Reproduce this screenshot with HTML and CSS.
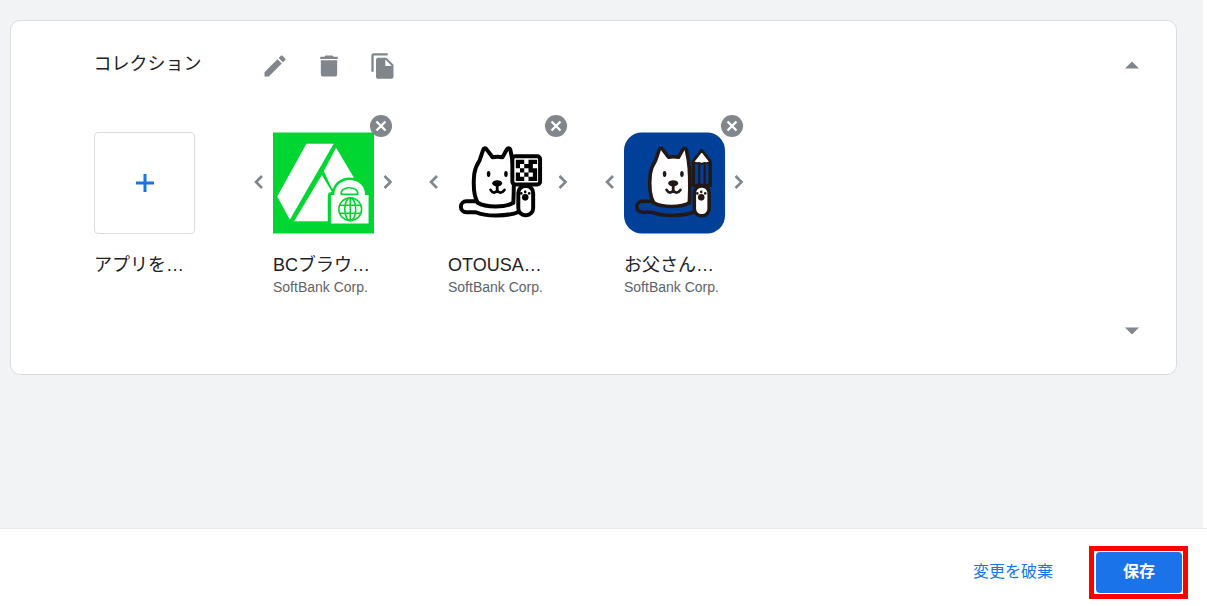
FILE: index.html
```html
<!DOCTYPE html>
<html lang="ja">
<head>
    <meta charset="UTF-8">
    <title>コレクション</title>
    <link rel="stylesheet" href="styles.css">
</head>
<body>
    <main class="content">
        <section class="card">
            <!-- Collection header -->
            <div class="card-head">
                <h2 class="title">コレクション</h2>
                <div class="tools">
                    <svg class="tool" viewBox="0 0 24 24"><path d="M3 17.25V21h3.75L17.81 9.94l-3.75-3.75L3 17.25zM20.71 7.04c.39-.39.39-1.02 0-1.41l-2.34-2.34c-.39-.39-1.02-.39-1.41 0l-1.83 1.83 3.75 3.75 1.83-1.83z"/></svg>
                    <svg class="tool" viewBox="0 0 24 24"><path d="M5 19c0 1.1.9 2 2 2h10c1.1 0 2-.9 2-2V7H5v12zM19.500 4H16l-1-1H9L8 4H4.500v2h15V4z"/></svg>
                    <svg class="tool" viewBox="0 0 24 24"><path d="M16 1H4c-1.1 0-2 .9-2 2v14h2V3h12V1zm-1 4l6 6v10c0 1.1-.9 2-2 2H7.99C6.89 23 6 22.1 6 21l.01-14c0-1.1.89-2 1.99-2h7zm-1 7h5.5L14 6.5V12z"/></svg>
                </div>
                <svg class="caret" viewBox="0 0 14 8"><path d="M0 7.500L7 .5l7 7z"/></svg>
            </div>

            <!-- Apps in the collection -->
            <div class="apps">
                <div class="add-app">
                    <div class="add-tile">
                        <svg class="plus" viewBox="0 0 18 18"><path d="M7.500 0h3v7.500H18v3h-7.500V18h-3v-7.500H0v-3h7.500z"/></svg>
                    </div>
                    <div class="app-name">アプリを…</div>
                </div>

                <div class="app">
                    <div class="app-row">
                        <svg class="arrow" viewBox="0 0 12 16"><path d="M9 2L3 8l6 6"/></svg>
                        <div class="app-icon">
                            <svg class="pic" viewBox="0 0 102 102">
                                <rect width="102" height="102" fill="#00d632"/>
                                <path fill="#fff" d="M33.700 11.300H61.300L17 88 4.300 64.700z"/>
                                <path fill="#fff" d="M63.700 15.300L82 46.300 70 60 59.300 56.300 51.300 39z"/>
                                <path fill="#fff" d="M49.300 43L59.300 59.700 55.300 63V89.700H21.300z"/>
                                <path fill="#fff" stroke="#00d632" stroke-width="5" d="M58.500 63H62C62 43 93 43 93 63H96.500V92H58.500z"/>
                                <path fill="#fff" d="M58.500 63H62C62 43 93 43 93 63H96.500V92H58.500z"/>
                                <path fill="none" stroke="#00d632" stroke-width="1.600" d="M69 62.500c-2-9 18-9 16.500 0z"/>
                                <g fill="none" stroke="#00d632" stroke-width="1.600">
                                    <circle cx="78" cy="77.500" r="11.500"/>
                                    <ellipse cx="78" cy="77.500" rx="5.500" ry="11.500"/>
                                    <path d="M78 66v23M67.500 73.500h21M67.500 81.500h21"/>
                                </g>
                            </svg>
                            <button class="remove"><svg viewBox="0 0 22 22"><path d="M6.500 6.500l9 9M15.500 6.500l-9 9"/></svg></button>
                        </div>
                        <svg class="arrow" viewBox="0 0 12 16"><path d="M2.500 2l6 6-6 6"/></svg>
                    </div>
                    <div class="app-text">
                        <div class="app-name">BCブラウ…</div>
                        <div class="app-vendor">SoftBank Corp.</div>
                    </div>
                </div>

                <div class="app">
                    <div class="app-row">
                        <svg class="arrow" viewBox="0 0 12 16"><path d="M9 2L3 8l6 6"/></svg>
                        <div class="app-icon">
                            <svg class="pic" viewBox="0 0 102 102">
                                <g fill="#fff" stroke="#000" stroke-width="4" stroke-linejoin="round" stroke-linecap="round">
                                    <path d="M28 69.500H18.500a5.500 5.500 0 0 0 0 11H28C38 85 60 85 72 80"/>
                                    <path d="M30 71C26 64 25.500 52 26.500 42 27.500 35 30 31 32 28L35.500 17.500C36 15.500 38 15.500 39 17L45 25C48 24.500 52 24.500 55 25L59.500 17C60.500 15.500 62.500 15.500 63 17.500L65 28C66.500 38 66.500 60 66 71 58 76 38 76 30 71z"/>
                                    <rect x="71" y="54" width="15" height="29.500" rx="7"/>
                                    <rect x="65" y="24" width="28" height="28.500" rx="3"/>
                                </g>
                                <path fill="#000" d="M68.500 27.500h21.500v21.500H68.500zM77 27.500v4.300h4.300v-4.300zM72.700 31.800v4.300H77v-4.300zM85.700 31.800v4.300h4.300v-4.300zM68.500 36.100v4.300h4.200v-4.300zM77 36.100v4.300h4.300v-4.300zM72.700 40.400v4.300H77v-4.300zM81.300 40.400v4.300h4.400v-4.300zM77 44.700v4.300h4.300v-4.300z"/>
                                <g fill="#000">
                                    <ellipse cx="41" cy="42" rx="1.800" ry="3"/>
                                    <ellipse cx="58.500" cy="42" rx="1.800" ry="3"/>
                                    <ellipse cx="49.700" cy="51.300" rx="5" ry="3.200"/>
                                    <circle cx="78" cy="65.500" r="3.300"/>
                                    <circle cx="74" cy="61.500" r="1.300"/>
                                    <circle cx="78" cy="60" r="1.300"/>
                                    <circle cx="82" cy="61.500" r="1.300"/>
                                </g>
                                <path fill="none" stroke="#000" stroke-width="2.800" stroke-linecap="round" d="M43 58c2 3.500 5 3.500 6.700 .5 1.700 3 4.800 3 7.300-.5M49.700 53v5.500"/>
                            </svg>
                            <button class="remove"><svg viewBox="0 0 22 22"><path d="M6.500 6.500l9 9M15.500 6.500l-9 9"/></svg></button>
                        </div>
                        <svg class="arrow" viewBox="0 0 12 16"><path d="M2.500 2l6 6-6 6"/></svg>
                    </div>
                    <div class="app-text">
                        <div class="app-name">OTOUSA…</div>
                        <div class="app-vendor">SoftBank Corp.</div>
                    </div>
                </div>

                <div class="app">
                    <div class="app-row">
                        <svg class="arrow" viewBox="0 0 12 16"><path d="M9 2L3 8l6 6"/></svg>
                        <div class="app-icon">
                            <svg class="pic" viewBox="0 0 102 102">
                                <rect width="102" height="102" rx="18" fill="#004098"/>
                                <g stroke="#231815" stroke-width="3.600" stroke-linejoin="round" stroke-linecap="round">
                                    <path fill="#004098" d="M70 29.500L78.500 18.500 87 29.500V53.500H70z"/>
                                    <path fill="#fff" stroke-width="2" d="M70 29.500L78.500 18.500 87 29.500C84 33 81 29 78.500 32 76 29 73 33 70 29.500z"/>
                                    <path fill="none" stroke-width="2.200" d="M76 33V52M81.500 33V52"/>
                                    <path fill="#004098" d="M28 69.500H18.500a5.500 5.500 0 0 0 0 11H28C38 85 60 85 72 80"/>
                                    <path fill="#fff" d="M30 71C26 64 25.500 52 26.500 42 27.500 35 30 31 32 28L35.500 17.500C36 15.500 38 15.500 39 17L45 25C48 24.500 52 24.500 55 25L59.500 17C60.500 15.500 62.500 15.500 63 17.500L65 28C66.500 38 66.500 60 66 71 58 76 38 76 30 71z"/>
                                    <rect fill="#fff" x="71" y="54" width="15" height="30" rx="7"/>
                                </g>
                                <g fill="#231815">
                                    <ellipse cx="41" cy="42" rx="1.800" ry="3"/>
                                    <ellipse cx="58.500" cy="42" rx="1.800" ry="3"/>
                                    <ellipse cx="49.700" cy="51.300" rx="5" ry="3.200"/>
                                    <circle cx="78" cy="65.500" r="3.300"/>
                                    <circle cx="74" cy="61.500" r="1.300"/>
                                    <circle cx="78" cy="60" r="1.300"/>
                                    <circle cx="82" cy="61.500" r="1.300"/>
                                </g>
                                <path fill="none" stroke="#231815" stroke-width="2.800" stroke-linecap="round" d="M43 58c2 3.500 5 3.500 6.700 .5 1.700 3 4.800 3 7.300-.5M49.700 53v5.500"/>
                            </svg>
                            <button class="remove"><svg viewBox="0 0 22 22"><path d="M6.500 6.500l9 9M15.500 6.500l-9 9"/></svg></button>
                        </div>
                        <svg class="arrow" viewBox="0 0 12 16"><path d="M2.500 2l6 6-6 6"/></svg>
                    </div>
                    <div class="app-text">
                        <div class="app-name">お父さん…</div>
                        <div class="app-vendor">SoftBank Corp.</div>
                    </div>
                </div>
            </div>

            <div class="card-foot">
                <svg class="caret" viewBox="0 0 14 8"><path d="M0 .5l7 7 7-7z"/></svg>
            </div>
        </section>
    </main>

    <!-- Save bar -->
    <footer class="save-bar">
        <a class="discard">変更を破棄</a>
        <div class="highlight">
            <button class="save">保存</button>
        </div>
    </footer>
</body>
</html>
```
FILE: styles.css
```css
html, body {
    margin: 0;
    height: 606px;
    overflow: hidden;
    background-color: #fff;
}
body {
    display: flex;
    flex-direction: column;
    font-family: "Liberation Sans", "Noto Sans CJK JP", sans-serif;
    color: #202124;
}
.content {
    box-sizing: border-box;
    width: 1203px;
    height: 528px;
    padding: 20px 26px 0 10px;
    background-color: #f1f3f4;
}
.card {
    box-sizing: border-box;
    height: 355px;
    padding: 31px 37px 0 83px;
    background-color: #fff;
    border: 1px solid #dadce0;
    border-radius: 10px;
}
.card-head {
    display: flex;
    align-items: center;
    height: 28px;
}
.title {
    margin: 0 59px 4px -0.5px;
    font-size: 18px;
    font-weight: 400;
    line-height: 24px;
}
.tools {
    display: flex;
    gap: 26px;
    flex: 1;
}
.tool {
    width: 28px;
    height: 28px;
    fill: #80868b;
}
.card-head .caret {
    margin-bottom: 2px;
}
.caret {
    width: 14px;
    height: 8px;
    fill: #80868b;
}
.apps {
    display: flex;
    margin-top: 52px;
}
.add-app {
    width: 101px;
    margin-right: 50px;
}
.add-tile {
    box-sizing: border-box;
    display: flex;
    align-items: center;
    justify-content: center;
    height: 102px;
    background-color: #fff;
    border: 1px solid #dadce0;
    border-radius: 4px;
}
.plus {
    width: 18px;
    height: 18px;
    fill: #1a73e8;
}
.app {
    width: 157px;
    margin-right: 18px;
}
.app:last-child {
    margin-left: 1px;
}
.app-row {
    display: flex;
    align-items: center;
}
.arrow {
    width: 28px;
    height: 16px;
    margin-top: -2px;
    fill: none;
    stroke: #80868b;
    stroke-width: 2.600;
}
.app-icon {
    position: relative;
    width: 101px;
    height: 102px;
}
.pic {
    display: block;
    width: 101px;
    height: 102px;
}
.remove {
    position: absolute;
    top: -17px;
    right: -18px;
    width: 22px;
    height: 22px;
    padding: 0;
    border: none;
    border-radius: 50%;
    background-color: #80868b;
}
.remove svg {
    display: block;
    fill: none;
    stroke: #fff;
    stroke-width: 2.400;
}
.app-text {
    padding-left: 28px;
}
.app-name {
    margin-top: 19px;
    font-size: 18px;
    line-height: 24px;
    white-space: nowrap;
}
.app-vendor {
    margin-top: 2px;
    font-size: 14px;
    line-height: 17px;
    color: #5f6368;
    white-space: nowrap;
}
.card-foot {
    display: flex;
    justify-content: flex-end;
    margin-top: 31px;
}
.save-bar {
    box-sizing: border-box;
    display: flex;
    align-items: flex-start;
    justify-content: flex-end;
    height: 78px;
    padding: 17px 19px 0 0;
    background-color: #fff;
    border-top: 1px solid #e8eaed;
}
.discard {
    margin: 14px 36px 0 0;
    font-size: 16px;
    line-height: 24px;
    color: #1a73e8;
}
.highlight {
    padding: 1px 1px 1px 2px;
    border: 5px solid #ff0000;
}
.save {
    display: block;
    width: 86px;
    height: 41px;
    padding: 0 0 5px;
    font-family: inherit;
    font-size: 16px;
    font-weight: 700;
    color: #fff;
    background-color: #1a73e8;
    border: none;
    border-radius: 4px;
}
```
